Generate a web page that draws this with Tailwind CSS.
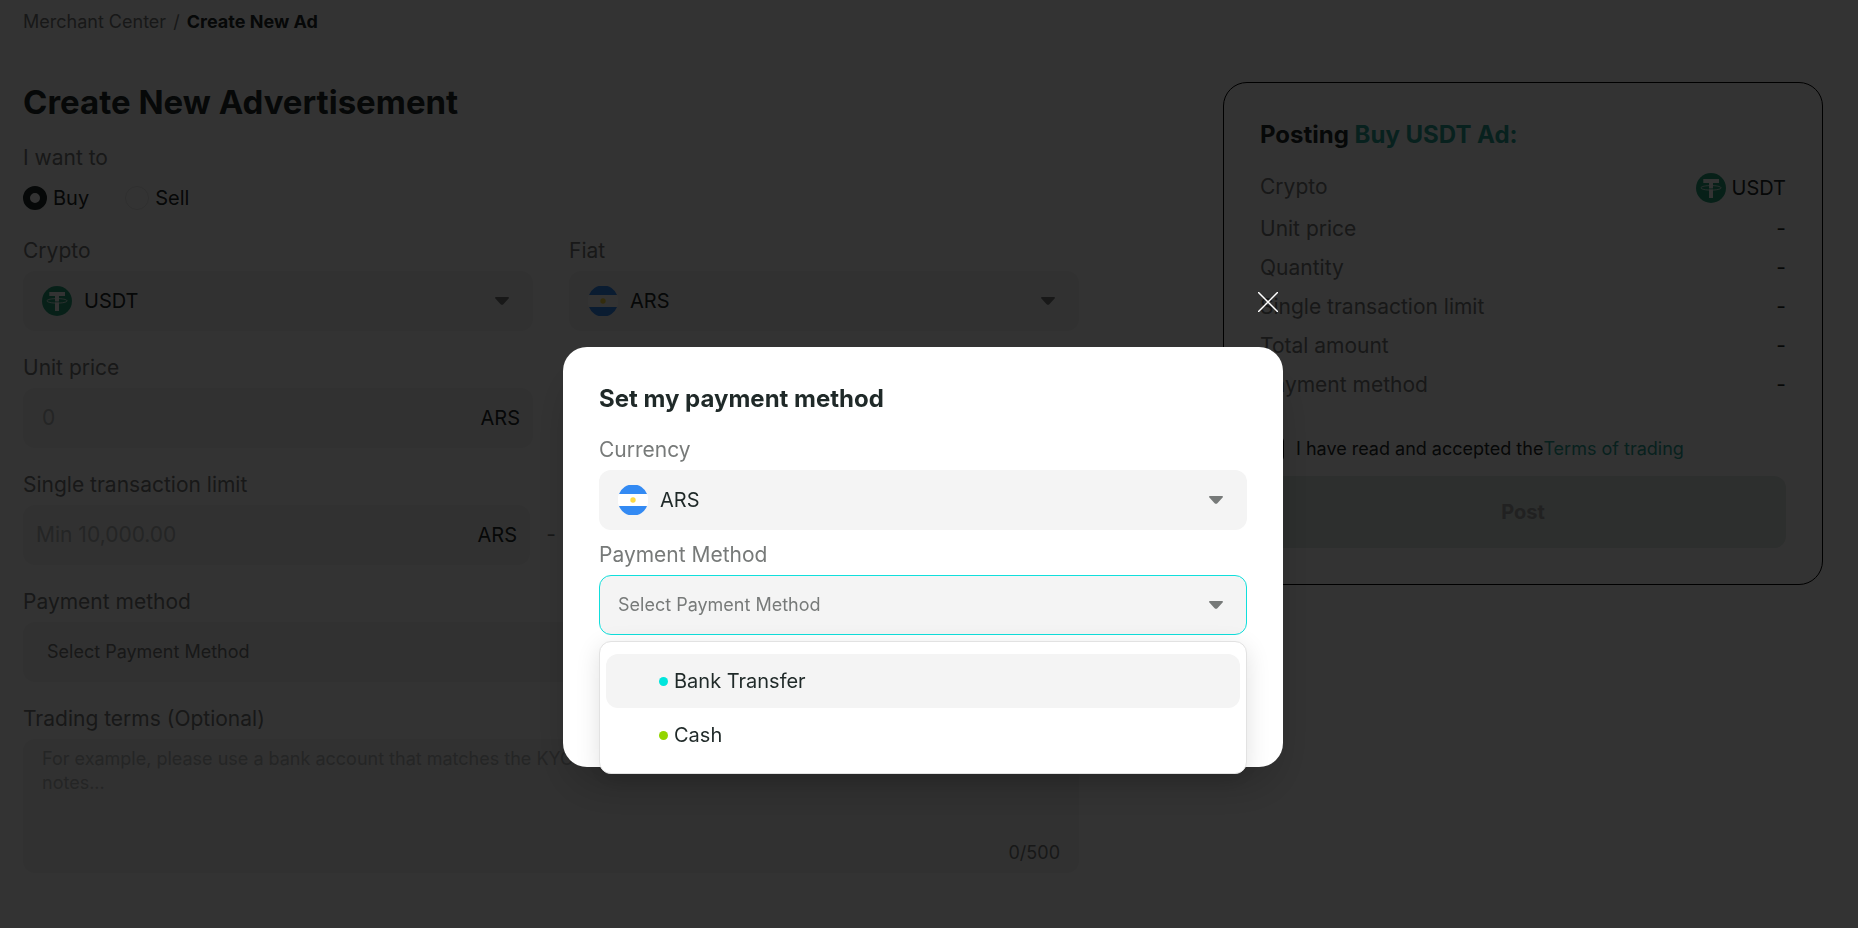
<!DOCTYPE html>
<html lang="en">
<head>
  <meta charset="UTF-8" />
  <meta name="viewport" content="width=device-width, initial-scale=1.0" />
  <title>Create New Ad</title>
  <script src="https://cdn.jsdelivr.net/npm/@tailwindcss/browser@4"></script>
</head>
<body class="min-h-screen bg-white font-['Inter',sans-serif] text-xl leading-6 text-[#1f2928] overflow-hidden">
  <svg class="hidden">
    <symbol id="usdt" viewBox="0 0 30 30">
      <circle cx="15" cy="15" r="15" fill="#26a17b" />
      <path d="M7.300 6h15.700v4h-6v15h-4v-15h-5.700z" fill="#fff" />
      <path d="M13 12.600c-5 .3-8 1.100-8 2.300s4.300 2.200 10 2.200 10-1 10-2.200-3-2-8-2.300" fill="none" stroke="#fff" stroke-width="0.8" />
      <path d="M13 15.800q2 .2 4 0" fill="none" stroke="#26a17b" stroke-width="0.8" />
    </symbol>
    <symbol id="argentina" viewBox="0 0 30 30">
      <path d="M1 9a15 15 0 0 1 28 0z" fill="#338af3" />
      <path d="M1 9h28a15 15 0 0 1 0 12h-28a15 15 0 0 1 0-12z" fill="#fff" />
      <path d="M1 21h28a15 15 0 0 1-28 0z" fill="#338af3" />
      <circle cx="15" cy="15" r="2.700" fill="#ffda44" />
    </symbol>
    <symbol id="caret" viewBox="0 0 14 8">
      <path d="M1 0h12q1.600.3.600 1.600l-5.200 5.600q-1.400 1.200-2.800 0l-5.200-5.600q-1-1.300.6-1.600z" fill="#777a79" />
    </symbol>
  </svg>

  <nav class="px-[23px] pt-[10px] text-lg leading-6 text-[#777a79]">
    <a href="#">Merchant Center</a> <span class="mx-[2px]">/</span> <a href="#" class="font-bold text-[#1f2928]">Create New Ad</a>
  </nav>

  <div class="flex items-start justify-between pl-[23px] pr-[35px] pt-12">
    <form class="w-[1056px] text-[21px] leading-6 text-[#777a79]">
      <h1 class="text-[33px] leading-10 font-bold text-[#1f2928]">Create New Advertisement</h1>

      <p class="mt-6">I want to</p>
      <div class="mt-4 flex gap-9 text-xl leading-6 text-[#1f2928]">
        <label class="flex items-center gap-[6px]">
          <input type="radio" name="side" checked class="size-6 appearance-none rounded-full border border-[#e8e8e8] checked:border-[7px] checked:border-[#1f2928]" />Buy
        </label>
        <label class="flex items-center gap-[6px]">
          <input type="radio" name="side" class="size-6 appearance-none rounded-full border border-[#e8e8e8] checked:border-[7px] checked:border-[#1f2928]" />Sell
        </label>
      </div>

      <div class="mt-[29px] grid grid-cols-2 gap-x-9 gap-y-[25px]">
        <div>
          <label for="crypto" class="block">Crypto</label>
          <div class="mt-2 flex h-15 items-center rounded-xl bg-[#f4f4f4] pl-[19px] pr-6">
            <svg class="mr-3 size-[30px]"><use href="#usdt" /></svg>
            <select id="crypto" class="h-full flex-1 appearance-none text-xl text-[#1f2928]"><option>USDT</option></select>
            <svg class="h-2 w-[14px]"><use href="#caret" /></svg>
          </div>
        </div>
        <div>
          <label for="fiat" class="block">Fiat</label>
          <div class="mt-2 flex h-15 items-center rounded-xl bg-[#f4f4f4] pl-[19px] pr-6">
            <svg class="mr-3 size-[30px]"><use href="#argentina" /></svg>
            <select id="fiat" class="h-full flex-1 appearance-none text-xl text-[#1f2928]"><option>ARS</option></select>
            <svg class="h-2 w-[14px]"><use href="#caret" /></svg>
          </div>
        </div>
        <div>
          <label for="price" class="block">Unit price</label>
          <div class="mt-2 flex h-15 items-center rounded-xl bg-[#f4f4f4] pl-[19px] pr-[13px]">
            <input id="price" type="text" placeholder="0" class="min-w-0 flex-1 placeholder:text-[#b5b7b7]" />
            <span class="text-xl text-[#1f2928]">ARS</span>
          </div>
        </div>
      </div>

      <label for="min" class="mt-[25px] block">Single transaction limit</label>
      <div class="mt-2 flex items-center">
        <div class="flex h-15 flex-1 items-center rounded-xl bg-[#f4f4f4] px-[13px]">
          <input id="min" type="text" placeholder="Min 10,000.00" class="min-w-0 flex-1 placeholder:text-[#b5b7b7]" />
          <span class="text-xl text-[#1f2928]">ARS</span>
        </div>
        <span class="w-[42px] text-center">-</span>
        <div class="flex h-15 flex-1 items-center rounded-xl bg-[#f4f4f4] px-[13px]">
          <input type="text" aria-label="Maximum limit" class="min-w-0 flex-1" />
        </div>
      </div>

      <label for="method" class="mt-[25px] block">Payment method</label>
      <div class="mt-2 flex h-15 rounded-xl bg-[#f4f4f4] px-6">
        <select id="method" class="flex-1 appearance-none text-lg"><option>Select Payment Method</option></select>
      </div>

      <label for="terms" class="mt-[25px] block">Trading terms (Optional)</label>
      <div class="mt-2 rounded-xl bg-[#f4f4f4] px-[19px] py-2 text-lg leading-6">
        <textarea id="terms" class="block h-[94px] w-full resize-none leading-6 placeholder:text-[#b5b7b7]" placeholder="For example, please use a bank account that matches the KYC name of the account and do not include other payment notes..."></textarea>
        <p class="text-right">0/500</p>
      </div>
    </form>

    <aside class="w-[600px] rounded-3xl border border-black p-9 text-[#777a79]">
      <h2 class="text-2xl leading-8 font-bold text-[#1f2928]">Posting <span class="text-[#2aa597]">Buy USDT Ad:</span></h2>
      <dl class="mt-[22px] text-[21px] leading-6">
        <div class="flex justify-between">
          <dt class="mt-[2px]">Crypto</dt>
          <dd class="flex items-center gap-[6px] text-xl text-[#1f2928]"><svg class="size-[30px]"><use href="#usdt" /></svg>USDT</dd>
        </div>
        <div class="mt-[14px] flex justify-between"><dt>Unit price</dt><dd class="text-[#1f2928]">-</dd></div>
        <div class="mt-[15px] flex justify-between"><dt>Quantity</dt><dd class="text-[#1f2928]">-</dd></div>
        <div class="mt-[15px] flex justify-between"><dt>Single transaction limit</dt><dd class="text-[#1f2928]">-</dd></div>
        <div class="mt-[15px] flex justify-between"><dt>Total amount</dt><dd class="text-[#1f2928]">-</dd></div>
        <div class="mt-[15px] flex justify-between"><dt>Payment method</dt><dd class="text-[#1f2928]">-</dd></div>
      </dl>
      <div class="mt-10 flex items-center text-lg leading-6 text-[#1f2928]">
        <input id="accept" type="checkbox" class="mr-3 size-6 appearance-none rounded border border-black" />
        <label for="accept">I have read and accepted the</label><a href="#" class="text-[#2aa597]">Terms of trading</a>
      </div>
      <button type="button" class="mt-[15px] h-[72px] w-full rounded-xl bg-[#dfe8e4] font-bold text-[#a3a5a5]">Post</button>
    </aside>
  </div>

  <!-- Payment method modal -->
  <div class="fixed inset-0 flex items-center justify-center bg-black/80 pt-[186px] pr-3">
    <div role="dialog" aria-labelledby="dialog-title" class="relative h-[420px] w-[720px] rounded-3xl bg-white px-9 pt-9 shadow-2xl">
      <button type="button" aria-label="Close" class="absolute -top-15 right-0 p-[5px]">
        <svg class="size-5" viewBox="0 0 20 20" fill="none" stroke="#fff" stroke-width="1.500"><path d="M0 0l20 20M20 0l-20 20" /></svg>
      </button>
      <h2 id="dialog-title" class="text-2xl leading-8 font-bold">Set my payment method</h2>
      <label for="currency" class="mt-[23px] block text-[21px] leading-6 text-[#777a79]">Currency</label>
      <div class="mt-2 flex h-15 items-center rounded-xl bg-[#f4f4f4] pl-[19px] pr-6">
        <svg class="mr-3 size-[30px]"><use href="#argentina" /></svg>
        <select id="currency" class="h-full flex-1 appearance-none"><option>ARS</option></select>
        <svg class="h-2 w-[14px]"><use href="#caret" /></svg>
      </div>
      <label for="pay" class="mt-[13px] block text-[21px] leading-6 text-[#777a79]">Payment Method</label>
      <div class="relative mt-2">
        <div class="flex h-15 items-center rounded-xl border border-[#0fdfdc] bg-[#f4f4f4] pl-[18px] pr-[23px]">
          <select id="pay" class="h-full flex-1 appearance-none text-lg text-[#777a79]"><option>Select Payment Method</option></select>
          <svg class="h-2 w-[14px]"><use href="#caret" /></svg>
        </div>
        <ul role="listbox" aria-label="Payment Method" class="absolute inset-x-0 top-full mt-[6px] rounded-xl border border-[#e2e2e2] bg-white px-[6px] pt-3 pb-[11px] shadow-[0_6px_24px_rgba(0,0,0,0.12)]">
          <li role="option" aria-selected="true" class="flex h-[54px] items-center rounded-xl bg-[#f4f4f4] pl-[53px]"><span class="mr-[6px] size-[9px] rounded-full bg-[#00e5dc]"></span>Bank Transfer</li>
          <li role="option" aria-selected="false" class="flex h-[54px] items-center rounded-xl pl-[53px]"><span class="mr-[6px] size-[9px] rounded-full bg-[#93d500]"></span>Cash</li>
        </ul>
      </div>
    </div>
  </div>
</body>
</html>
